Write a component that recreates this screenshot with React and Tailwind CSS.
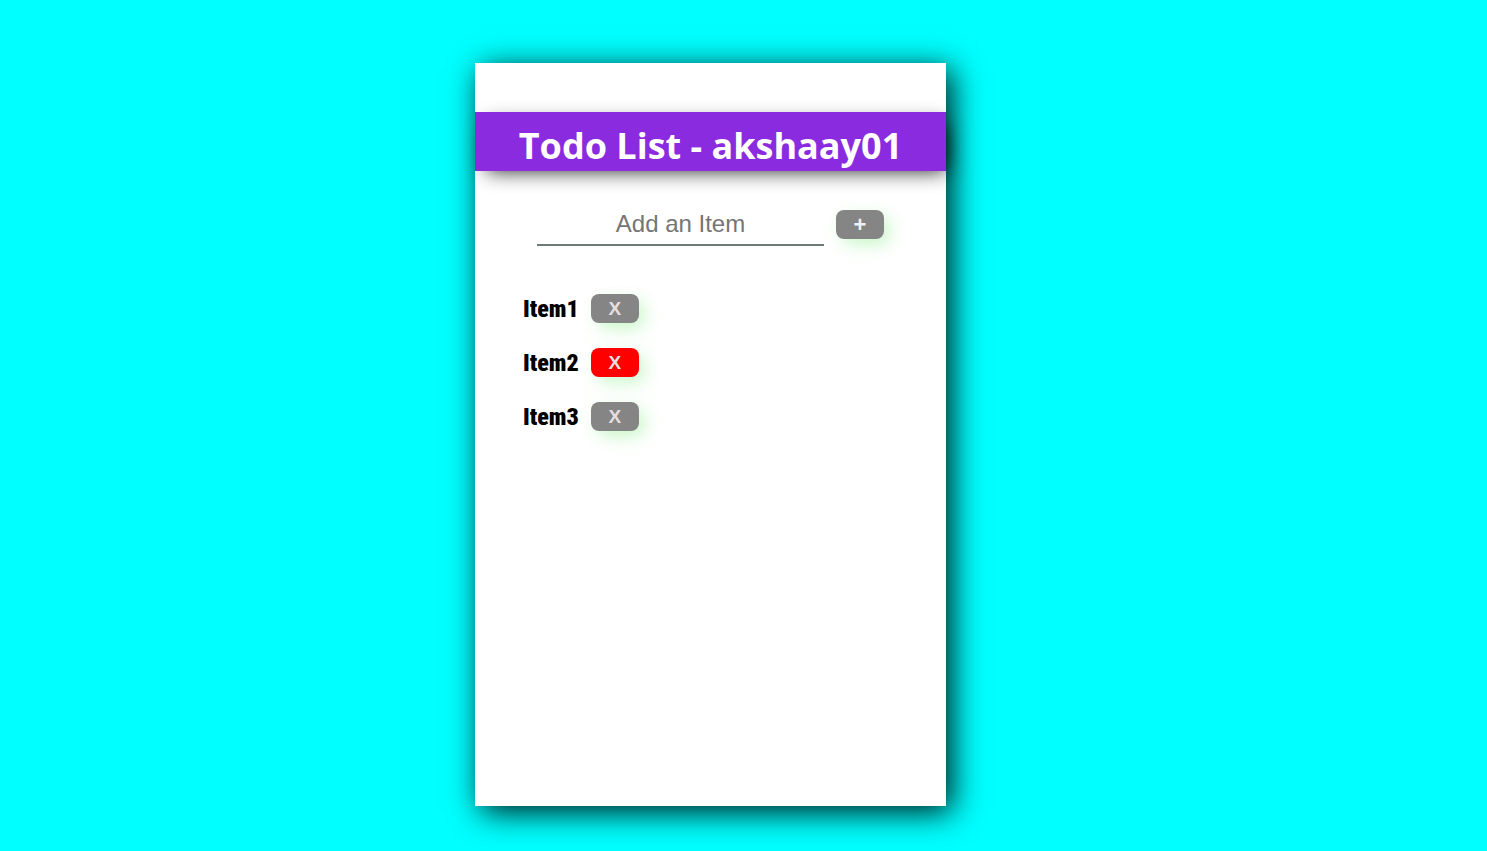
import { useState } from "react";

const BUTTON =
  "h-[29px] w-12 shrink-0 rounded-lg font-['Liberation_Sans',Arial,sans-serif] text-center shadow-[6px_6px_18px_-2px_#90ee9090]";

function TodoItem({ text, active, onRemove }) {
  return (
    <li className="flex h-[54px] items-center gap-3">
      <span className="pt-0.5 font-[Impact,'Roboto_Condensed',sans-serif] text-2xl leading-8 font-black text-black">
        {text}
      </span>
      <button
        type="button"
        aria-label={`Remove ${text}`}
        onClick={onRemove}
        className={`${BUTTON} pt-0.5 text-[19px] leading-5 font-bold text-[#e6dede] hover:bg-[red] ${active ? "bg-[red]" : "bg-[#858585]"}`}
      >
        X
      </button>
    </li>
  );
}

export default function App() {
  const [draft, setDraft] = useState("");
  const [items, setItems] = useState(["Item1", "Item2", "Item3"]);

  const addItem = (event) => {
    event.preventDefault();
    if (!draft.trim()) return;
    setItems([...items, draft.trim()]);
    setDraft("");
  };

  return (
    <main className="flex min-h-screen justify-center bg-[cyan] pt-[63px] pr-[66px] pb-[45px]">
      <section className="w-full max-w-[471px] bg-white pt-[49px] shadow-[6px_6px_30px_#000000e8]">
        <h1 className="bg-[#8a2be0] pt-[10px] pb-px text-center font-['Segoe_UI','Open_Sans',sans-serif] text-4xl leading-12 font-bold text-white shadow-[6px_6px_20px_-6px_#000000e0]">
          Todo List - akshaay01
        </h1>
        <form onSubmit={addItem} className="flex items-center gap-3 pt-8 pr-[62px] pl-[62px]">
          <input
            type="text"
            aria-label="Add an Item"
            placeholder="Add an Item"
            value={draft}
            onChange={(event) => setDraft(event.target.value)}
            className="h-[43px] min-w-0 flex-1 border-b-2 border-[#6c7c74] bg-transparent text-center font-['Liberation_Sans',Arial,sans-serif] text-2xl text-black outline-none placeholder:text-[#757575]"
          />
          <button type="submit" aria-label="Add item" className={`${BUTTON} bg-[#858585] text-[22px] leading-6 font-bold text-[#f0f0fa]`}>
            +
          </button>
        </form>
        <ul className="pt-[35px] pl-12">
          {items.map((item, index) => (
            <TodoItem
              key={index}
              text={item}
              active={index === 1}
              onRemove={() => setItems(items.filter((_, i) => i !== index))}
            />
          ))}
        </ul>
      </section>
    </main>
  );
}
